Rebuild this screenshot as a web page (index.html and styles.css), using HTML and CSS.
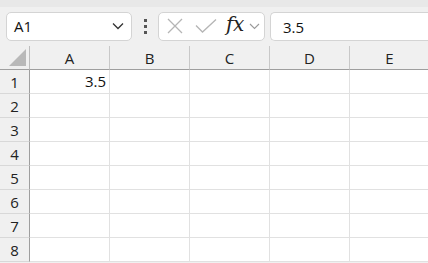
FILE: index.html
```html
<!DOCTYPE html>
<html lang="en">
<head>
    <meta charset="UTF-8">
    <title>Sheet</title>
    <link rel="stylesheet" href="styles.css">
</head>
<body>
    <div class="toolbar">
        <div class="name-box">
            <span>A1</span>
            <svg class="chevron" width="12" height="8" viewBox="0 0 12 8"><path d="M1 1.5 L6 6.5 L11 1.5" fill="none" stroke="#333" stroke-width="1.3"/></svg>
        </div>
        <div class="grip"><i></i><i></i><i></i></div>
        <div class="fx-buttons">
            <svg width="16" height="16" viewBox="0 0 16 16"><path d="M1 1 L15 15 M15 1 L1 15" stroke="#b5b5b5" stroke-width="1.3"/></svg>
            <svg width="22" height="14" viewBox="0 0 22 14"><path d="M1 6.5 L7.5 13 L21 0.5" fill="none" stroke="#b5b5b5" stroke-width="1.3"/></svg>
            <span class="fx">fx</span>
            <svg width="11" height="7" viewBox="0 0 11 7"><path d="M1 1 L5.5 5.5 L10 1" fill="none" stroke="#9a9a9a" stroke-width="1.1"/></svg>
        </div>
        <div class="formula">3.5</div>
    </div>
    <div class="sheet">
        <div class="corner"><span class="tri"></span></div>
        <div class="col-head">A</div>
        <div class="col-head">B</div>
        <div class="col-head">C</div>
        <div class="col-head">D</div>
        <div class="col-head">E</div>

        <div class="row-head">1</div><div class="cell num">3.5</div><div class="cell"></div><div class="cell"></div><div class="cell"></div><div class="cell"></div>
        <div class="row-head">2</div><div class="cell"></div><div class="cell"></div><div class="cell"></div><div class="cell"></div><div class="cell"></div>
        <div class="row-head">3</div><div class="cell"></div><div class="cell"></div><div class="cell"></div><div class="cell"></div><div class="cell"></div>
        <div class="row-head">4</div><div class="cell"></div><div class="cell"></div><div class="cell"></div><div class="cell"></div><div class="cell"></div>
        <div class="row-head">5</div><div class="cell"></div><div class="cell"></div><div class="cell"></div><div class="cell"></div><div class="cell"></div>
        <div class="row-head">6</div><div class="cell"></div><div class="cell"></div><div class="cell"></div><div class="cell"></div><div class="cell"></div>
        <div class="row-head">7</div><div class="cell"></div><div class="cell"></div><div class="cell"></div><div class="cell"></div><div class="cell"></div>
        <div class="row-head">8</div><div class="cell"></div><div class="cell"></div><div class="cell"></div><div class="cell"></div><div class="cell"></div>
    </div>
</body>
</html>
```

FILE: styles.css
```css
body {
    margin: 0;
    font-family: "Open Sans", "Liberation Sans", sans-serif;
    font-size: 14px;
    color: #222;
    background: #f0f0f0;
    overflow: hidden;
}
.toolbar {
    display: flex;
    align-items: center;
    height: 46px;
    padding: 0 0 0 6px;
    background: #f0f0f0;
    border-top: 7px solid #e8e8e8;
    box-sizing: border-box;
}
.name-box {
    display: flex;
    align-items: center;
    justify-content: space-between;
    width: 126px;
    height: 29px;
    margin-top: -1px;
    box-sizing: border-box;
    padding: 0 7px 0 7px;
    background: #fff;
    border: 1px solid #d4d4d4;
    border-radius: 5px;
    font-size: 15px;
    color: #111;
}
.grip {
    display: flex;
    flex-direction: column;
    gap: 3px;
    margin: -1px 11px 0 12px;
}
.grip i {
    display: block;
    width: 3px;
    height: 3px;
    background: #555;
}
.fx-buttons {
    display: flex;
    align-items: center;
    width: 107px;
    height: 29px;
    margin-top: -1px;
    box-sizing: border-box;
    padding: 0 0 0 8px;
    background: #fff;
    border: 1px solid #d4d4d4;
    border-radius: 5px;
}
.fx-buttons svg:nth-child(2) {
    margin-left: 12px;
}
.fx {
    font-family: "DejaVu Serif", "Liberation Serif", serif;
    font-style: italic;
    font-size: 20px;
    color: #222;
    margin: -4px 0 0 9px;
    letter-spacing: -0.5px;
}
.fx-buttons svg:last-child {
    margin-left: 5px;
}
.formula {
    flex: 1;
    height: 29px;
    margin: -1px 0 0 5px;
    box-sizing: border-box;
    padding: 4px 0 0 12px;
    background: #fff;
    border: 1px solid #d4d4d4;
    border-right: none;
    border-radius: 5px 0 0 5px;
    font-size: 15px;
    color: #111;
}
.sheet {
    display: grid;
    grid-template-columns: 30px repeat(5, 80px);
    grid-template-rows: 24px repeat(8, 24px);
    background: #fff;
}
.corner {
    position: relative;
    background: #f0f0f0;
    border-right: 1px solid #bdbdbd;
    border-bottom: 1px solid #a0a0a0;
}
.tri {
    position: absolute;
    right: 3px;
    bottom: 3px;
    width: 0;
    height: 0;
    border-left: 17px solid transparent;
    border-bottom: 17px solid #b9b9b9;
}
.col-head {
    background: #f0f0f0;
    border-right: 1px solid #c8c8c8;
    border-bottom: 1px solid #9e9e9e;
    display: flex;
    align-items: center;
    justify-content: center;
    font-size: 15px;
    color: #222;
}
.row-head {
    background: #f0f0f0;
    border-right: 1px solid #9e9e9e;
    border-bottom: 1px solid #d8d8d8;
    display: flex;
    align-items: center;
    justify-content: center;
    font-size: 15px;
    color: #222;
}
.cell {
    border-right: 1px solid #e1e1e1;
    border-bottom: 1px solid #e1e1e1;
}
.num {
    text-align: right;
    padding-right: 3px;
    line-height: 23px;
    font-size: 15px;
    color: #111;
}
```
